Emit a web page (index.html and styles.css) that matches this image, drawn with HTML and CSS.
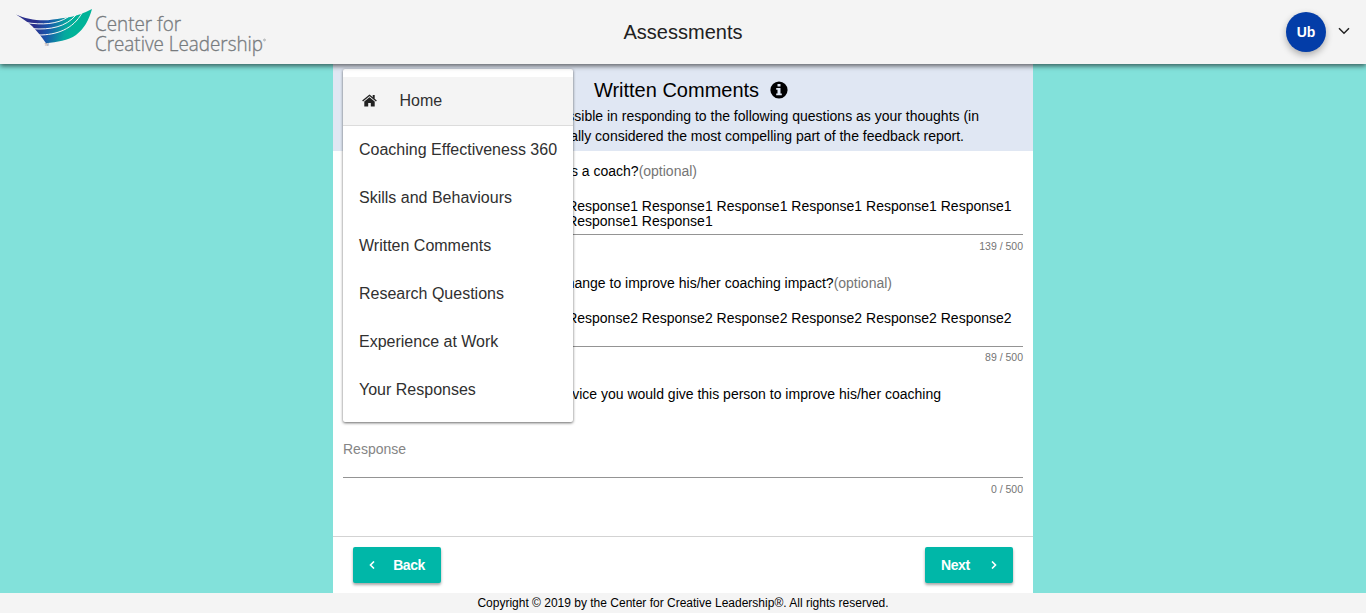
FILE: index.html
```html
<!DOCTYPE html>
<html lang="en">
<head>
<meta charset="utf-8">
<title>Assessments</title>
<link rel="stylesheet" href="styles.css">
</head>
<body>
<header class="topbar">
  <svg class="logo" width="270" height="64" viewBox="0 0 270 64" role="img" aria-label="Center for Creative Leadership">
    <defs>
      <linearGradient id="wing" gradientUnits="userSpaceOnUse" x1="34" y1="28" x2="72" y2="36">
        <stop offset="0" stop-color="#2b2f8c"/>
        <stop offset=".35" stop-color="#1a55aa"/>
        <stop offset=".8" stop-color="#05a89f"/>
        <stop offset="1" stop-color="#00b398"/>
      </linearGradient>
    </defs>
    <path fill="url(#wing)" d="M16 14.500C25 18.500 37 21 48 20.200C55 19.500 60 18.500 66 17.800C75 16.500 84 13.500 92 9C89 20 84 29 76 35C68 40.500 57 42 46 43.300C42 37 37 31 32 26C27 21.500 22 18 16 14.500Z"/>
    <g fill="none" stroke="#f4f4f4" stroke-width="1">
      <path d="M26 22.600C42 25 57 24.500 68 17"/>
      <path d="M32.500 28.700C50 30 66 27 76 15"/>
      <path d="M38.500 35C57 35 73 29 82 13"/>
    </g>
    <text class="logo-tm" x="44.500" y="46">TM</text>
    <text class="logo-text" x="95" y="31" textLength="86" lengthAdjust="spacingAndGlyphs">Center for</text>
    <text class="logo-text" x="95" y="51" textLength="168" lengthAdjust="spacingAndGlyphs">Creative Leadership</text>
    <circle cx="264.500" cy="40" r=".9" fill="none" stroke="#8d9194" stroke-width=".7"/>
  </svg>
  <h1 class="page-title">Assessments</h1>
  <div class="account">
    <span class="avatar">Ub</span>
    <svg class="chevron" width="12" height="8" viewBox="0 0 12 8"><path d="M1 1.200L6 6.200L11 1.200" fill="none" stroke="#222" stroke-width="1.500"/></svg>
  </div>
</header>

<main class="sheet">
  <section class="intro">
    <h2 class="intro-title">Written Comments
      <svg width="18" height="18" viewBox="0 0 18 18"><circle cx="9" cy="9" r="8.600"/><path fill="#e0e7f3" d="M7.500 3H10.500V5.500H7.500ZM6.200 7H10.500V12.500H11.800V14.300H6.200V12.500H7.500V8.700H6.200Z"/></svg>
    </h2>
    <p class="line intro-first">possible in responding to the following questions as your thoughts (in</p>
    <p class="line intro-second">ally considered the most compelling part of the feedback report.</p>
  </section>

  <section class="question">
    <p class="line q-one">as a coach?<span class="optional">(optional)</span></p>
    <div class="field">Response1 Response1 Response1 Response1 Response1 Response1 Response1 Response1 Response1 Response1 Response1 Response1 Response1 Response1</div>
    <div class="count">139 / 500</div>
  </section>
  <section class="question">
    <p class="line q-two">change to improve his/her coaching impact?<span class="optional">(optional)</span></p>
    <div class="field">Response2 Response2 Response2 Response2 Response2 Response2 Response2 Response2 Response2</div>
    <div class="count raised">89 / 500</div>
  </section>
  <section class="question last">
    <p class="line q-three">advice you would give this person to improve his/her coaching</p>
    <div class="field placeholder">Response</div>
    <div class="count">0 / 500</div>
  </section>

  <div class="actions">
    <button class="btn" type="button"><svg class="arrow" width="6" height="8" viewBox="0 0 6 8"><path d="M5 .5L1.500 4L5 7.500"/></svg>Back</button>
    <button class="btn" type="button">Next<svg class="arrow" width="6" height="8" viewBox="0 0 6 8"><path d="M1 .5L4.500 4L1 7.500"/></svg></button>
  </div>

  <nav class="menu">
    <a class="item home"><svg class="home-icon" width="15" height="13" viewBox="0 0 15 13"><path fill="#222" d="M7.500 3.300L12.700 7.600V12.500H8.800V9H6.200V12.500H2.300V7.600Z"/><path fill="none" stroke="#222" stroke-width="1.400" d="M.6 7L7.500 1.300L14.400 7"/><path fill="#222" d="M10.700 1H12.700V5L10.700 3.400Z"/></svg>Home</a>
    <a class="item">Coaching Effectiveness 360</a>
    <a class="item">Skills and Behaviours</a>
    <a class="item">Written Comments</a>
    <a class="item">Research Questions</a>
    <a class="item">Experience at Work</a>
    <a class="item">Your Responses</a>
  </nav>
</main>

<footer class="footer">Copyright © 2019 by the Center for Creative Leadership®. All rights reserved.</footer>
</body>
</html>
```
FILE: styles.css
```css
* { box-sizing: border-box; }
body {
  margin: 0;
  height: 613px;
  display: flex;
  flex-direction: column;
  overflow: hidden;
  background: #82e1da;
  color: #000;
  font: 14px/20px "Liberation Sans", Arial, sans-serif;
}
h1, h2, p { margin: 0; font-weight: 400; }

.topbar {
  height: 64px;
  flex: none;
  display: grid;
  grid-template-columns: 1fr auto 1fr;
  align-items: center;
  background: #f4f4f4;
  box-shadow: 0 2px 5px rgba(0, 0, 0, .6);
  z-index: 2;
}
.logo { display: block; }
.logo-text {
  font: 300 21px "Open Sans", sans-serif;
  fill: #777b7e;
  stroke: #777b7e;
  stroke-width: .35px;
}
.logo-tm { font: 3px "Liberation Sans", sans-serif; fill: #777; }
.page-title { font-size: 20px; line-height: 24px; color: #212121; }
.account {
  display: flex;
  align-items: center;
  justify-content: flex-end;
  gap: 12px;
  padding-right: 16px;
}
.avatar {
  width: 40px;
  height: 40px;
  border-radius: 50%;
  background: #033da8;
  color: #fff;
  font-weight: 700;
  line-height: 40px;
  text-align: center;
  box-shadow: 0 3px 7px rgba(0, 0, 0, .3);
}
.chevron { margin-top: -3px; }

.sheet {
  position: relative;
  width: 700px;
  height: 529px;
  flex: none;
  margin: 0 auto;
  display: flex;
  flex-direction: column;
  background: #fff;
}
.intro { height: 87px; padding: 13px 10px 0; background: #e0e7f3; }
.intro-title {
  display: flex;
  align-items: center;
  justify-content: center;
  gap: 11px;
  padding-left: 16px;
  height: 26px;
  font-size: 20px;
  line-height: 26px;
}
.intro-first { margin-top: 3px; width: 636px; }
.intro-second { width: 621px; }
.line { text-align: right; white-space: nowrap; }
.q-one { width: 354px; }
.q-two { width: 549px; }
.q-three { width: 598px; }
.optional { color: #757575; }

.question { height: 112px; padding: 10px 10px 0; }
.question.last { height: auto; flex: 1; padding-top: 9px; }
.field {
  height: 38px;
  margin-top: 16px;
  padding-top: 2px;
  line-height: 15px;
  border-bottom: 1px solid #949494;
}
.placeholder { margin-top: 36px; color: #858585; }
.count {
  padding-top: 4px;
  font-size: 10.500px;
  line-height: 15px;
  text-align: right;
  color: #757575;
}
.count.raised { padding-top: 3px; }

.actions {
  height: 57px;
  display: flex;
  justify-content: space-between;
  align-items: flex-start;
  padding: 10px 20px 0;
  border-top: 1px solid #d3d3d3;
}
.btn {
  width: 88px;
  height: 36px;
  display: flex;
  align-items: center;
  justify-content: space-between;
  padding: 0 16px;
  border: 0;
  border-radius: 2px;
  background: #00b7a8;
  color: #fff;
  font: 700 14px/36px "Liberation Sans", Arial, sans-serif;
  letter-spacing: -.4px;
  box-shadow: 0 2px 3px rgba(0, 0, 0, .35);
}
.arrow { fill: none; stroke: #fff; stroke-width: 1.600; }

.menu {
  position: absolute;
  left: 10px;
  top: 5px;
  width: 230px;
  height: 353px;
  padding: 8px 0;
  background: #fff;
  border-radius: 2px;
  box-shadow: 0 1px 3px rgba(0, 0, 0, .6);
}
.item {
  display: flex;
  align-items: center;
  height: 48px;
  padding-left: 16px;
  font-size: 16px;
  color: #303030;
  white-space: nowrap;
}
.home {
  height: 49px;
  gap: 23px;
  padding-left: 18.500px;
  background: #f4f4f4;
  border-bottom: 1px solid #dcdcdc;
}
.home-icon { margin-top: -2px; }

.footer {
  height: 20px;
  background: #f4f4f4;
  font-size: 12px;
  line-height: 20px;
  text-align: center;
}
```
